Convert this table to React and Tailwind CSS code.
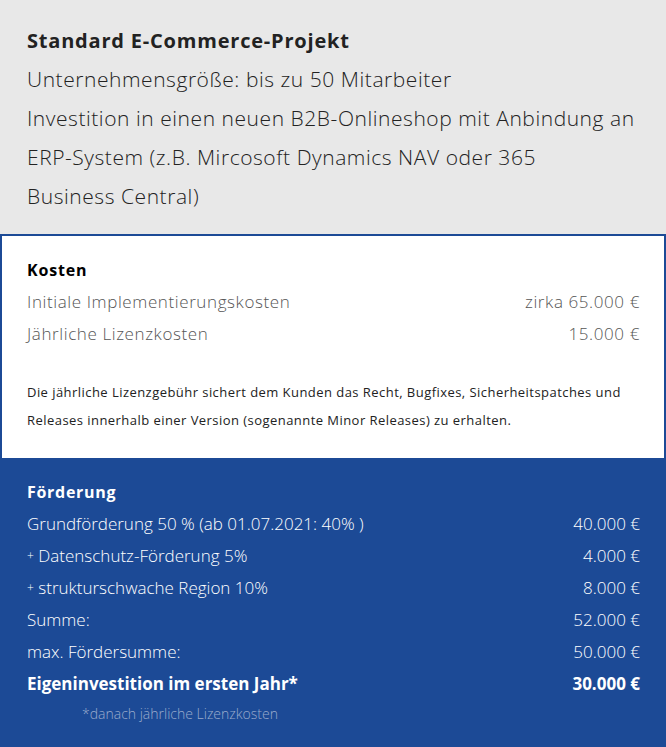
import React from 'react';

const font = { fontFamily: '"Open Sans", Lato, sans-serif' };

const Row = ({ label, value, className = '' }) => (
  <div className={`flex justify-between items-center h-8 ${className}`}>
    <span>{label}</span>
    <span>{value}</span>
  </div>
);

export default function App() {
  return (
    <div className="w-[666px] h-[747px] flex flex-col" style={font}>
      <div className="bg-[#e8e8e8] px-[27px] pt-[22px] pb-[18px] text-[#222]">
        <h2 className="text-[20px] font-bold leading-[38px] tracking-[0.8px]">Standard E-Commerce-Projekt</h2>
        <div className="text-[21px] font-light leading-[39px] tracking-[0.55px]">
          <p>Unternehmensgröße: bis zu 50 Mitarbeiter</p>
          <p>Investition in einen neuen B2B-Onlineshop mit Anbindung an<br />ERP-System (z.B. Mircosoft Dynamics NAV oder 365<br />Business Central)</p>
        </div>
      </div>
      <div className="bg-white border-2 border-b-0 border-[#1c4a96] pl-[25px] pr-[24px] pt-[18px] pb-[24px]">
        <h3 className="text-[16px] font-bold leading-8 tracking-[0.8px] text-black">Kosten</h3>
        <div className="text-[17px] font-light tracking-[0.6px] text-[#555]">
          <Row label="Initiale Implementierungskosten" value="zirka 65.000 €" />
          <Row label="Jährliche Lizenzkosten" value="15.000 €" />
        </div>
        <p className="mt-7 text-[13px] leading-7 tracking-[0.45px] text-[#222]">
          Die jährliche Lizenzgebühr sichert dem Kunden das Recht, Bugfixes, Sicherheitspatches und<br />Releases innerhalb einer Version (sogenannte Minor Releases) zu erhalten.
        </p>
      </div>
      <div className="flex-1 bg-[#1c4a96] text-white px-[26px] pl-[27px] pt-[18px]">
        <h3 className="text-[16px] font-bold leading-8 tracking-[0.7px]">Förderung</h3>
        <div className="text-[17px] font-light">
          <Row label="Grundförderung 50 % (ab 01.07.2021: 40% )" value="40.000 €" />
          <Row label={<><span className="text-[12px] align-[2px]">+</span> Datenschutz-Förderung 5%</>} value="4.000 €" />
          <Row label={<><span className="text-[12px] align-[2px]">+</span> strukturschwache Region 10%</>} value="8.000 €" />
          <Row label="Summe:" value="52.000 €" />
          <Row label="max. Fördersumme:" value="50.000 €" />
          <Row label="Eigeninvestition im ersten Jahr*" value="30.000 €" className="font-bold" />
        </div>
        <p className="pl-[55px] text-[14px] font-light leading-7 text-[#9aabcc]">*danach jährliche Lizenzkosten</p>
      </div>
    </div>
  );
}
